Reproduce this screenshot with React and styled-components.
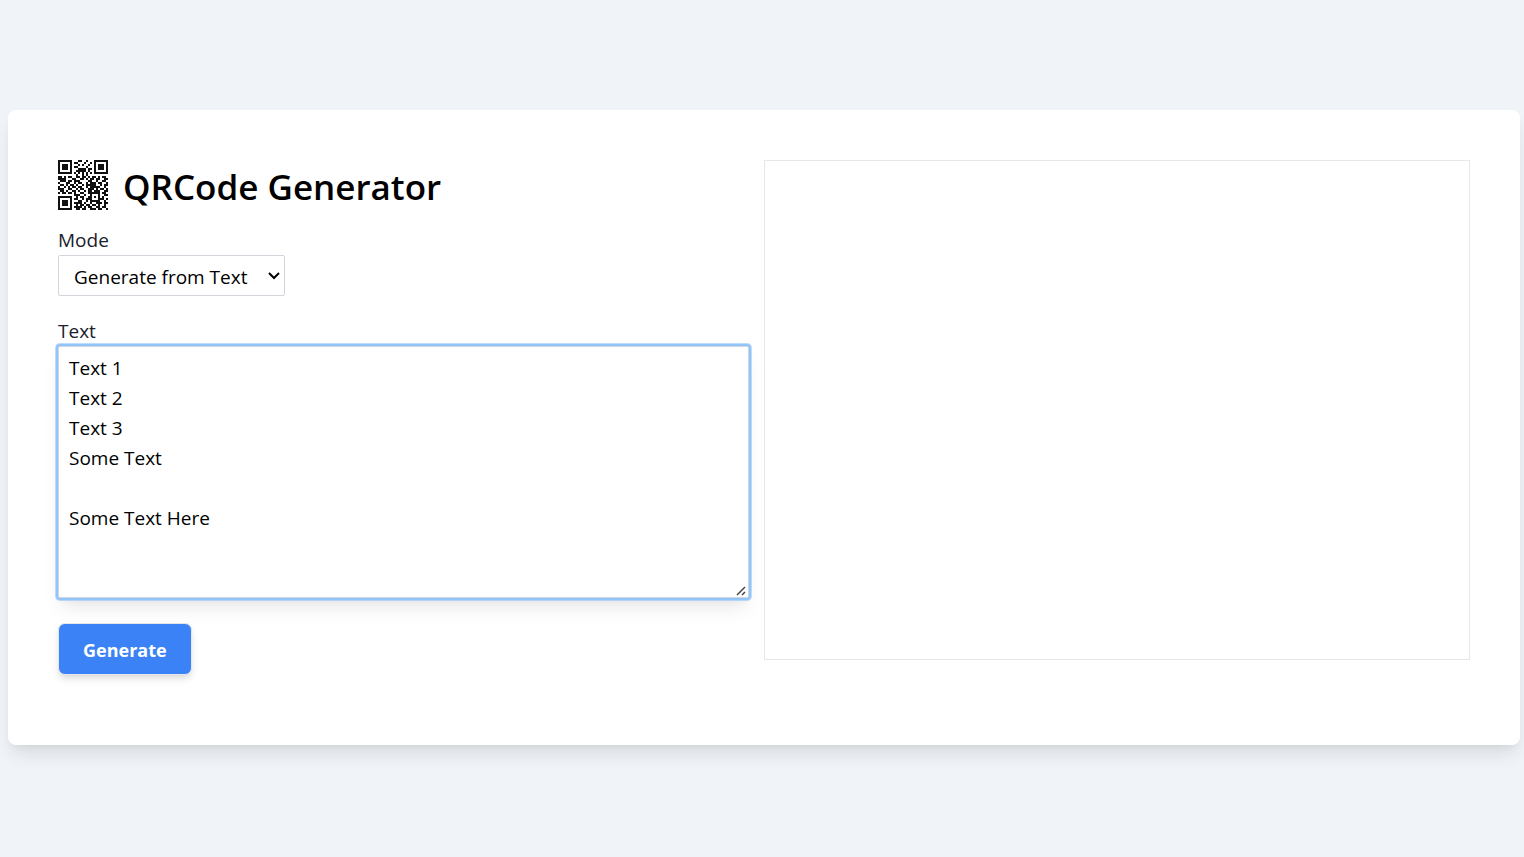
import React from "react";
import styled, { createGlobalStyle } from "styled-components";

const fontStack = '"Open Sans", "Noto Sans", sans-serif';

const GlobalStyle = createGlobalStyle`
  *, *::before, *::after { box-sizing: border-box; }
  body { margin: 0; background: #f0f4f8; color: #000; font-family: ${fontStack}; }
`;

const Page = styled.div`
  min-height: 100vh;
  padding: 0 4px 2px 8px;
  display: flex;
  align-items: center;
`;

const Card = styled.main`
  flex: 1;
  display: grid;
  grid-template-columns: 1fr 1fr;
  padding: 50px 50px 70px;
  background: #fff;
  border-radius: 8px;
  box-shadow: 0 12px 19px -4px rgba(0, 0, 0, 0.1), 0 5px 8px -3px rgba(0, 0, 0, 0.05);
`;

const Form = styled.form`
  padding-right: 15px;
`;

const Header = styled.header`
  display: flex;
  align-items: center;
  gap: 15px;
  margin-bottom: 15px;
`;

const Logo = styled.svg`
  width: 50px;
  height: 50px;
  flex: none;
  fill: #111;
`;

const Title = styled.h1`
  margin: 0;
  padding-top: 4px;
  font-size: 35px;
  line-height: 46px;
  font-weight: 600;
`;

const Field = styled.div`
  display: flex;
  flex-direction: column;
  align-items: flex-start;
  margin-bottom: ${(props) => (props.$last ? "25px" : "20px")};
`;

const Label = styled.label`
  font-size: 19px;
  line-height: 30px;
  color: #1a202c;
`;

const SelectBox = styled.div`
  position: relative;
`;

const Select = styled.select`
  appearance: none;
  display: block;
  width: 227px;
  height: 41px;
  padding: 2px 30px 0 15px;
  border: 1px solid #d2d6dc;
  border-radius: 2px;
  background: #fff;
  color: #000;
  font-family: inherit;
  font-size: 19px;
`;

const Chevron = styled.svg`
  position: absolute;
  top: 16px;
  right: 5px;
  width: 12px;
  height: 9px;
  fill: none;
  stroke: #000;
  stroke-width: 2;
  pointer-events: none;
`;

const TextBox = styled.div`
  position: relative;
  width: 100%;
`;

const TextArea = styled.textarea`
  display: block;
  width: 100%;
  height: 252px;
  padding: 6px 10px;
  border: 1px solid #d2d6dc;
  border-radius: 2px;
  outline: none;
  box-shadow: 0 0 0 2px #93c5fd, 0 0 0 3px rgba(147, 197, 253, 0.6),
    0 12px 19px -4px rgba(0, 0, 0, 0.1), 0 5px 8px -3px rgba(0, 0, 0, 0.05);
  color: #000;
  font-family: inherit;
  font-size: 19px;
  line-height: 30px;
  resize: vertical;

  &::-webkit-resizer {
    background: transparent;
  }
`;

const Grip = styled.svg`
  position: absolute;
  right: 3px;
  bottom: 2px;
  width: 10px;
  height: 10px;
  fill: none;
  stroke: #444;
  stroke-width: 1.5;
  pointer-events: none;
`;

const Button = styled.button`
  height: 52px;
  padding: 2px 24px 0;
  border: 1px solid #e5e7eb;
  border-radius: 7px;
  background: #3b82f6;
  box-shadow: 0 5px 8px -1px rgba(0, 0, 0, 0.1), 0 3px 5px -1px rgba(0, 0, 0, 0.06);
  color: #fff;
  font-family: inherit;
  font-size: 18px;
  font-weight: 700;
`;

const Preview = styled.section`
  height: 500px;
  border: 1px solid #e5e7eb;
`;

const modules = [
  "1111111000110010001111111",
  "1000001011000100101000001",
  "1011101000101001001011101",
  "1011101011000010001011101",
  "1011101000111101101011101",
  "1000001001111101001000001",
  "1111111010101010101111111",
  "0000000001001010000000000",
  "1101011001101101011010110",
  "1111000110011010110110011",
  "0111011011100001100100110",
  "1000110010110010111011001",
  "0110101101001011111001011",
  "1001010110110010111110010",
  "1110011001011001110101101",
  "0110100110100101101110011",
  "1011011010011001111110110",
  "0000000011100100100010011",
  "1111111001011001101010100",
  "1000001011001011100011101",
  "1011101000110010111110010",
  "1011101011110100100111011",
  "1011101001011011011010010",
  "1000001011110101100110110",
  "1111111001101100111011001",
];

function QrLogo() {
  return (
    <Logo viewBox="0 0 25 25" role="img" aria-label="QR code">
      {modules.map((row, y) =>
        [...row].map((cell, x) =>
          cell === "1" ? <rect key={`${x}-${y}`} x={x} y={y} width="1" height="1" /> : null
        )
      )}
    </Logo>
  );
}

const sample = "Text 1\nText 2\nText 3\nSome Text\n\nSome Text Here";

export default function App() {
  return (
    <>
      <GlobalStyle />
      <Page>
        <Card>
          <Form onSubmit={(event) => event.preventDefault()}>
            <Header>
              <QrLogo />
              <Title>QRCode Generator</Title>
            </Header>
            <Field>
              <Label htmlFor="mode">Mode</Label>
              <SelectBox>
                <Select id="mode" defaultValue="text">
                  <option value="text">Generate from Text</option>
                </Select>
                <Chevron viewBox="0 0 12 9" aria-hidden="true">
                  <path d="M1 2l5 5 5-5" />
                </Chevron>
              </SelectBox>
            </Field>
            <Field $last>
              <Label htmlFor="text">Text</Label>
              <TextBox>
                <TextArea id="text" defaultValue={sample} spellCheck={false} />
                <Grip viewBox="0 0 10 10" aria-hidden="true">
                  <path d="M1 9l8-8M6 9l3-3" />
                </Grip>
              </TextBox>
            </Field>
            <Button type="submit">Generate</Button>
          </Form>
          <Preview aria-label="Generated codes" />
        </Card>
      </Page>
    </>
  );
}
